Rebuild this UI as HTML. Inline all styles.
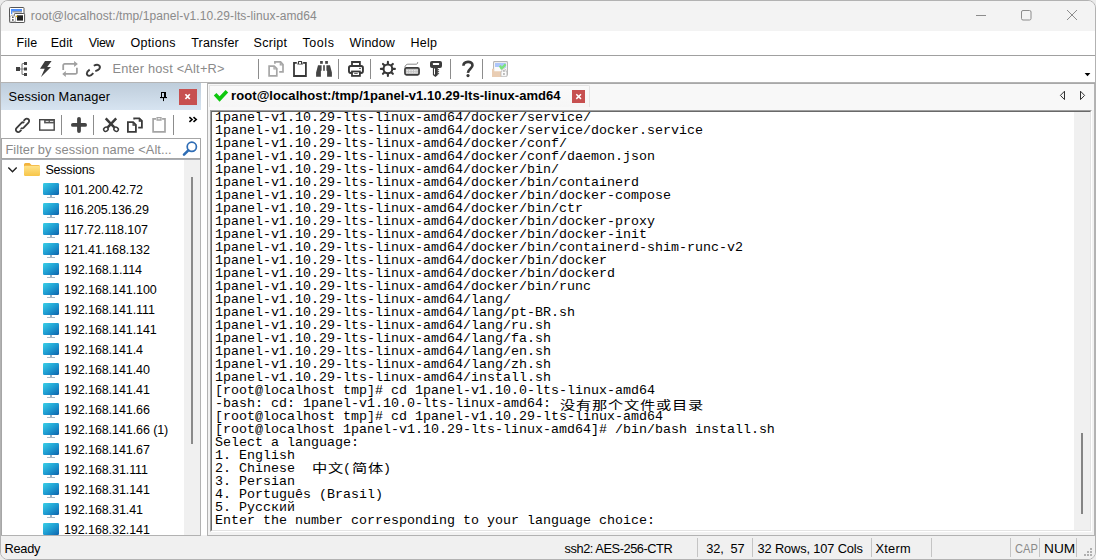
<!DOCTYPE html>
<html lang="en">
<head>
<meta charset="utf-8">
<title>root@localhost:/tmp/1panel-v1.10.29-lts-linux-amd64</title>
<style>
html,body{margin:0;padding:0;background:#ebebeb;}
body{width:1096px;height:560px;position:relative;overflow:hidden;font-family:"Liberation Sans","Noto Sans CJK SC",sans-serif;font-size:12px;color:#000;}
.abs{position:absolute;}
.t{position:absolute;white-space:pre;line-height:16px;height:16px;}
#win{position:absolute;left:0;top:0;width:1094px;height:558px;border:1px solid #b2b2b2;border-radius:8px 8px 8px 8px;background:#f0f0f0;overflow:hidden;}
#win > *{position:absolute;}
/* coordinates inside #win are offset by -1 (border) ; use .in wrapper shifted */
#in{left:-1px;top:-1px;width:1096px;height:560px;}
#in > *{position:absolute;}
#title{left:0;top:0;width:1096px;height:31px;background:#f3f3f3;}
#menu{left:0;top:31px;width:1096px;height:24px;background:#fff;}
#menuline{left:1px;top:55px;width:1094px;height:1px;background:#a0a0a0;}
#tool{left:0;top:56px;width:1096px;height:26px;background:#fff;}
#toolline{left:0;top:82px;width:1096px;height:1px;background:#b4b4b4;}
#main{left:0;top:83px;width:1096px;height:452px;background:#fff;}
#smhead{left:1px;top:83px;width:200px;height:27px;background:linear-gradient(#becddb,#d7e4f1);}
#status{left:0;top:536px;width:1096px;height:24px;background:#f0f0f0;}
#statusline{left:1px;top:535px;width:200px;height:1px;background:#b2b2b2;}
.term{font-family:"Liberation Mono","Noto Sans CJK SC",monospace;font-size:13.33px;line-height:13px;white-space:pre;color:#000;}
.m{top:35px;font-size:12.5px;}
.sess{position:absolute;left:64px;height:20px;line-height:22px;white-space:pre;font-size:12.500px;letter-spacing:-0.080px;}
.mon{position:absolute;left:43px;width:17px;height:16px;}
.ln{height:13px;}
.cj{font-family:"Noto Sans CJK SC",sans-serif;font-size:12px;display:inline-block;height:13px;line-height:13px;vertical-align:top;letter-spacing:0.600px;position:relative;top:0.600px;left:1.500px;transform:scaleX(1.27);transform-origin:0 0;}
.st{top:541px;font-size:12.800px;}
.sep{position:absolute;width:1px;background:#c4c4c4;}
</style>
</head>
<body>
<div id="win"><div id="in">
<div id="title"></div>
<div id="menu"></div>
<div id="menuline"></div>
<div id="tool"></div>
<div id="toolline"></div>
<div id="main"></div>
<div id="smhead"></div>
<div id="statusline"></div>
<div id="status"></div>
<!--TITLE-->
<svg class="abs" style="left:9px;top:7px" width="17" height="17" viewBox="0 0 17 17">
<rect x="0.500" y="0.500" width="14.500" height="15" rx="0.800" fill="#fff" stroke="#555"/>
<rect x="2" y="2" width="11" height="2.400" fill="#4d90fe"/>
<rect x="2" y="2" width="1.300" height="5.200" fill="#4d90fe"/>
<path d="M3.500 4.900H13" stroke="#666" stroke-width="0.900"/>
<rect x="5.400" y="6.500" width="10.200" height="9" rx="0.800" fill="#fff" stroke="#555"/>
<rect x="8" y="8.300" width="6" height="5.300" fill="#222"/>
<circle cx="7.600" cy="9.400" r="0.800" fill="#f5c000"/>
<path d="M1 14.800V10.600Q1 8.200 3.800 8.200Q6.600 8.200 6.600 10.600V14.800Z" fill="#fff" stroke="#8a8a8a" stroke-width="0.600"/>
<rect x="3.100" y="9.500" width="1.500" height="1.400" fill="#333"/>
<rect x="3.100" y="12.200" width="1.500" height="1.500" fill="#333"/>
</svg>
<span class="t" id="ttl" style="left:30.8px;top:8px;color:#8a8a8a;font-size:12px;letter-spacing:0.086px">root@localhost:/tmp/1panel-v1.10.29-lts-linux-amd64</span>
<svg class="abs" style="left:970px;top:5px" width="116" height="22" viewBox="0 0 116 22">
<g fill="none" stroke="#8c8c8c" stroke-width="1">
<path d="M6 10.5H16"/>
<rect x="51.5" y="5.5" width="9.5" height="9.500" rx="1.5"/>
<path d="M97 5L107 15M107 5L97 15"/>
</g>
</svg>
<!--MENU-->
<span class="t m" id="m0" style="left:16.5px;letter-spacing:0.167px">File</span>
<span class="t m" id="m1" style="left:50.7px;letter-spacing:0.099px">Edit</span>
<span class="t m" id="m2" style="left:88.7px;letter-spacing:-0.315px">View</span>
<span class="t m" id="m3" style="left:130.4px;letter-spacing:0.333px">Options</span>
<span class="t m" id="m4" style="left:191.2px;letter-spacing:0.216px">Transfer</span>
<span class="t m" id="m5" style="left:253.6px;letter-spacing:0.280px">Script</span>
<span class="t m" id="m6" style="left:302.5px;letter-spacing:0.562px">Tools</span>
<span class="t m" id="m7" style="left:349.6px;letter-spacing:0.160px">Window</span>
<span class="t m" id="m8" style="left:410.5px;letter-spacing:0.252px">Help</span>
<!--TOOLBAR-->
<svg class="abs" style="left:0;top:56px" width="520" height="26" viewBox="0 56 520 26">
<!-- connect -->
<g fill="#404040">
<rect x="16" y="67" width="4" height="4"/>
<rect x="24" y="62" width="3" height="3"/>
<rect x="24" y="67.500" width="3" height="3"/>
<rect x="24" y="73" width="3" height="3"/>
</g>
<path d="M20 69H24" stroke="#7a7a7a" stroke-width="1.200"/>
<path d="M24 63.500H23A1 1 0 0 0 22 64.500V73.500A1 1 0 0 0 23 74.500H24" fill="none" stroke="#7a7a7a" stroke-width="1.100"/>
<!-- lightning -->
<path d="M45 61H51.600L47.200 67.100H51L41 77L44.700 68.800H40Z" fill="#3c3c3c"/>
<!-- repeat -->
<g fill="none" stroke="#a0a0a0" stroke-width="1.800">
<path d="M63.200 70V65.400A1.500 1.500 0 0 1 64.700 63.900H75"/>
<path d="M76.900 67.800V72.400A1.500 1.500 0 0 1 75.400 73.900H65"/>
</g>
<path d="M74.100 60.900L77.900 63.900L74.100 66.900ZM65.800 71L62.200 73.900L65.800 76.900Z" fill="#a0a0a0"/>
<!-- chain -->
<g fill="none" stroke="#3c3c3c" stroke-width="1.900">
<path d="M93.800 65.800Q96.800 64 98.800 65.200Q100.800 66.700 99.300 68.900Q98.200 70.300 95.300 71.100"/>
<path d="M89.700 69.600Q87 71.400 86.800 73.500Q86.900 75.700 89.300 75.900Q91.200 75.700 93.300 73.100"/>
</g>
<!-- separators -->
<g stroke="#8c8c8c" stroke-width="1">
<path d="M258.500 59V79M338.500 59V79M370.500 59V79M450.500 59V79M482.500 59V79"/>
</g>
<!-- copy (disabled) -->
<g fill="none" stroke="#a6a6a6" stroke-width="1.700">
<path d="M274.900 63.700V61.900H280.600L283 64.600V71.900H279.200"/>
<path d="M269.100 66.100H274.200L276.800 68.700V75.900H269.100Z"/>
</g>
<path d="M280.300 62V64.900H283M274 66.200V69H276.700" fill="none" stroke="#a6a6a6" stroke-width="1.200"/>
<!-- clipboard -->
<path d="M296.800 62.900H294V76H305.900V62.900H303.100" fill="none" stroke="#383838" stroke-width="1.800"/>
<path d="M298.300 61.100H301.900L302.900 64.600H297.300Z" fill="#383838"/>
<rect x="299" y="62" width="2" height="1.800" fill="#fff"/>
<!-- binoculars -->
<g fill="#444">
<rect x="320.100" y="61" width="2.700" height="2.800"/>
<rect x="325.200" y="61" width="2.700" height="2.800"/>
<path d="M318 65.200H321.600V70.800H320.900V76.700H316.100V72.400Z"/>
<path d="M326.400 65.200H330L331.900 72.400V76.700H327.100V70.800H326.400Z"/>
<rect x="323.200" y="65.200" width="1.600" height="5.600"/>
</g>
<!-- printer -->
<g>
<path d="M352 65.500V62H359.900V65.500" fill="none" stroke="#383838" stroke-width="1.800"/>
<rect x="348.950" y="66.050" width="14" height="6.900" rx="1.900" fill="#fff" stroke="#383838" stroke-width="1.900"/>
<rect x="352" y="71.500" width="7.900" height="4.400" fill="#fff" stroke="#383838" stroke-width="1.800"/>
<rect x="354.200" y="73.100" width="3.500" height="0.900" fill="#555"/>
<rect x="359" y="67.900" width="2" height="0.900" fill="#444"/>
</g>
<!-- gear -->
<g fill="none" stroke="#383838">
<circle cx="387.900" cy="68.900" r="4.350" stroke-width="2.100"/>
<path d="M392.90 68.90L394.90 68.90M391.44 72.44L392.85 73.85M387.90 73.90L387.90 75.90M384.36 72.44L382.95 73.85M382.90 68.90L380.90 68.90M384.36 65.36L382.95 63.95M387.90 63.90L387.90 61.90M391.44 65.36L392.85 63.95" stroke-width="2.100" stroke-linecap="round"/>
</g>
<!-- keyboard -->
<g>
<rect x="404.950" y="67.850" width="14.100" height="7" rx="1.500" fill="#c4c4c4" stroke="#3c3c3c" stroke-width="1.700"/>
<path d="M404.700 67.200C405.500 65.500 406.300 64.200 407.800 64.200H416C417.200 64.200 417.700 63.500 417.700 62.100" fill="none" stroke="#6a6a6a" stroke-width="0.800"/>
<path d="M406.500 70.500H417.500M406.500 72.300H417.500" stroke="#ededed" stroke-width="0.900" stroke-dasharray="1.600 0.900"/>
</g>
<!-- key -->
<g fill="#3a3a3a">
<rect x="430" y="61" width="12" height="7" rx="2"/>
<path d="M432.900 67.500H437.800V74.900L435.400 77L432.900 74.900Z"/>
<rect x="437.500" y="69.200" width="1.600" height="1"/>
<rect x="437.500" y="71.200" width="1.600" height="1"/>
<rect x="437.500" y="73.200" width="1.600" height="1"/>
</g>
<rect x="432.900" y="63" width="6.200" height="2.100" rx="0.500" fill="#fff"/>
<rect x="434" y="68.500" width="1" height="6" fill="#fff"/>
<!-- help -->
<path d="M463.400 65.800C463.500 60.700 472.500 60.600 472.500 65.300C472.500 68.500 468 68.900 467.900 72.900" fill="none" stroke="#3a3a3a" stroke-width="2.600"/>
<circle cx="468" cy="75.600" r="1.600" fill="#3a3a3a"/>
<!-- image icon (disabled) -->
<g>
<rect x="493.600" y="61.600" width="13.800" height="13.800" rx="0.800" fill="#fff" stroke="#b4b4b4" stroke-width="1.100"/>
<rect x="495" y="63" width="11" height="4.800" fill="#adc6fb"/>
<rect x="494.800" y="67" width="5.400" height="4.500" fill="#fbfbfb"/>
<path d="M492 68.800H494.200V71.300H501V76.900H492Z" fill="#e9cdb3"/>
<path d="M499.900 65.600L501.600 68.600L505.600 64.300" stroke="#7ce47c" stroke-width="2.300" fill="none" stroke-linejoin="round"/>
<path d="M501 76.400V71.600H501.800V70.800A2.100 2.100 0 0 1 506 70.800V71.600H506.900V76.400Z" fill="#fcfcfc" stroke="#b9b9b9" stroke-width="0.800"/>
<rect x="503.200" y="70.200" width="1.500" height="1.500" fill="#9a9a9a"/>
<rect x="503.200" y="73.200" width="1.500" height="1.600" fill="#9a9a9a"/>
</g>
</svg>
<span class="t" id="enterhost" style="left:112.5px;top:61px;color:#8a8a8a;font-size:12.800px;letter-spacing:0.206px">Enter host &lt;Alt+R&gt;</span>
<svg class="abs" style="left:1084px;top:72px" width="8" height="6" viewBox="0 0 8 6"><path d="M0.600 1H6.400L3.500 4.300Z" fill="#000"/></svg>
<!--SM-->
<span class="t" id="smtitle" style="left:8.5px;top:89px;font-size:12.800px;letter-spacing:0.129px">Session Manager</span>
<svg class="abs" style="left:159px;top:91px" width="10" height="12" viewBox="159 91 10 12"><g fill="#000"><rect x="161" y="92" width="5" height="1"/><rect x="161" y="92" width="1" height="5.500"/><rect x="164" y="92" width="2" height="5.500"/><rect x="160" y="97" width="7" height="1.100"/><rect x="163" y="98" width="1" height="3.100"/></g></svg>
<div class="abs" style="left:179px;top:89px;width:18px;height:16px;background:#c75050"></div>
<svg class="abs" style="left:184px;top:93px" width="8" height="8" viewBox="184 93 8 8"><path d="M185.400 94.200L189.800 99M189.800 94.200L185.400 99" stroke="#fff" stroke-width="1.700"/></svg>
<div class="abs" style="left:1px;top:110px;width:200px;height:28px;background:#fff"></div>
<svg class="abs" style="left:0;top:110px" width="202" height="28" viewBox="0 110 202 28">
<!-- link -->
<g fill="none" stroke="#3c3c3c" stroke-width="1.800">
<path transform="translate(20.530 127.300) rotate(-46.500)" d="M-1.200 2.350H-3.400A2.350 2.350 0 0 1 -3.400 -2.350H3.600A2.350 2.350 0 0 1 5.914 -0.408"/>
<path transform="translate(24.470 123.400) rotate(-46.500)" d="M1.200 -2.350H3.400A2.350 2.350 0 0 1 3.400 2.350H-3.600A2.350 2.350 0 0 1 -5.914 0.408"/>
</g>
<!-- window -->
<rect x="39.700" y="119.700" width="14.500" height="10.400" fill="none" stroke="#444" stroke-width="1.400"/>
<rect x="44.100" y="119.700" width="10.100" height="3.700" fill="#555"/>
<path d="M45.700 121.400H48.600M49.900 121.400H53.300" stroke="#fff" stroke-width="0.900"/>
<!-- seps -->
<path d="M61.500 115V135M93.500 115V135M173.500 115V135" stroke="#8c8c8c" stroke-width="1"/>
<!-- plus -->
<path d="M79 118.800V131M72.900 124.900H85.100" stroke="#444" stroke-width="3.800" stroke-linecap="round"/>
<!-- scissors -->
<g fill="none" stroke="#3c3c3c">
<path d="M105.700 118.300L114.300 127.300M116.200 118.300L107.700 127.300" stroke-width="2.500"/>
<ellipse cx="105.900" cy="129.300" rx="2.300" ry="2" stroke-width="1.500" transform="rotate(-35 105.900 129.300)"/>
<ellipse cx="116.100" cy="129.300" rx="2.300" ry="2" stroke-width="1.500" transform="rotate(35 116.100 129.300)"/>
</g>
<!-- copy -->
<g fill="none" stroke="#3a3a3a" stroke-width="1.800">
<path d="M134.200 119.600V118.300H139.400L141.900 120.800V127.600H138.200"/>
<path d="M127.900 122.200H133.200L135.900 124.900V131.800H127.900Z"/>
</g>
<path d="M139.300 118.400V121.100H141.900M133.100 122.300V125.100H135.800" fill="none" stroke="#3a3a3a" stroke-width="1.200"/>
<!-- paste (disabled) -->
<path d="M156 118.900H153.100V131.800H165V118.900H162.100" fill="none" stroke="#a4a4a4" stroke-width="1.700"/>
<path d="M157.100 120V117.700H161V120Z" fill="#fff" stroke="#a4a4a4" stroke-width="1.300"/>
<!-- chevrons -->
<path d="M189.400 117.200L192 119.500L189.400 121.800M193.500 117.200L196.200 119.500L193.500 121.800" fill="none" stroke="#000" stroke-width="1.600"/>
</svg>
<div class="abs" style="left:1px;top:159px;width:200px;height:1px;background:#a9adb4"></div>
<div class="abs" style="left:1px;top:138px;width:198px;height:19px;border:1px solid #a6a6a6;border-width:1px 1px 1px 1px;background:#fff;box-sizing:content-box"></div>
<span class="t" id="filter" style="left:5.5px;top:142px;color:#8a8a8a;font-size:12.800px;letter-spacing:0.052px">Filter by session name &lt;Alt...</span>
<svg class="abs" style="left:182px;top:140px" width="17" height="17" viewBox="0 0 17 17">
<circle cx="9.800" cy="6.800" r="4.600" fill="none" stroke="#2f6db5" stroke-width="1.700"/>
<path d="M6.300 10.300L2 14.600" stroke="#2f6db5" stroke-width="2.600" stroke-linecap="round"/>
</svg>
<!-- tree -->
<div class="abs" style="left:1px;top:160px;width:200px;height:375px;border-left:1px solid #a6a6a6;border-right:1px solid #b2b2b2;background:#fff;box-sizing:border-box"></div>
<div class="abs" style="left:184px;top:160px;width:16px;height:375px;background:#f0f0f0"></div>
<div class="abs" style="left:191px;top:177px;width:2px;height:267px;background:#8a8a8a"></div>
<svg width="0" height="0" style="position:absolute"><defs>
<linearGradient id="mg" x1="0" y1="0" x2="1" y2="1"><stop offset="0" stop-color="#3bd0e6"/><stop offset="0.500" stop-color="#1f9dd2"/><stop offset="1" stop-color="#0e63ad"/></linearGradient>
<linearGradient id="fg" x1="0" y1="0" x2="0" y2="1"><stop offset="0" stop-color="#ffe38a"/><stop offset="1" stop-color="#f7c548"/></linearGradient>
</defs></svg>
<svg class="abs" style="left:7px;top:165px" width="12" height="9" viewBox="7 165 12 9"><path d="M8.300 167.600L12.500 171.800L16.700 167.600" fill="none" stroke="#222" stroke-width="1.400"/></svg>
<svg class="abs" style="left:24px;top:162px" width="17" height="15" viewBox="0 0 17 15">
<path d="M0 2.500A1.500 1.500 0 0 1 1.500 1H5.500L7.500 3H14.500A1.500 1.500 0 0 1 16 4.500V6H0Z" fill="#f2b23a"/>
<rect x="0" y="3.800" width="16" height="10.200" rx="1.200" fill="url(#fg)"/>
</svg>
<span class="sess" id="sesslbl" style="left:45.5px;top:159px;letter-spacing:-0.227px">Sessions</span>
<div class="abs" id="treeclip" style="left:2px;top:160px;width:182px;height:375px;overflow:hidden"><div style="position:absolute;left:-2px;top:-160px;width:200px;height:560px">
<svg class="mon" style="top:183px" viewBox="0 0 17 16"><rect x="0" y="0" width="16" height="12" rx="1.200" fill="url(#mg)"/><rect x="7" y="12" width="2" height="2" fill="#9fb2c4"/><rect x="4" y="14" width="8" height="1" fill="#a9b6c2"/></svg><span class="sess" style="top:179px">101.200.42.72</span>
<svg class="mon" style="top:203px" viewBox="0 0 17 16"><rect x="0" y="0" width="16" height="12" rx="1.200" fill="url(#mg)"/><rect x="7" y="12" width="2" height="2" fill="#9fb2c4"/><rect x="4" y="14" width="8" height="1" fill="#a9b6c2"/></svg><span class="sess" style="top:199px">116.205.136.29</span>
<svg class="mon" style="top:223px" viewBox="0 0 17 16"><rect x="0" y="0" width="16" height="12" rx="1.200" fill="url(#mg)"/><rect x="7" y="12" width="2" height="2" fill="#9fb2c4"/><rect x="4" y="14" width="8" height="1" fill="#a9b6c2"/></svg><span class="sess" style="top:219px">117.72.118.107</span>
<svg class="mon" style="top:243px" viewBox="0 0 17 16"><rect x="0" y="0" width="16" height="12" rx="1.200" fill="url(#mg)"/><rect x="7" y="12" width="2" height="2" fill="#9fb2c4"/><rect x="4" y="14" width="8" height="1" fill="#a9b6c2"/></svg><span class="sess" style="top:239px">121.41.168.132</span>
<svg class="mon" style="top:263px" viewBox="0 0 17 16"><rect x="0" y="0" width="16" height="12" rx="1.200" fill="url(#mg)"/><rect x="7" y="12" width="2" height="2" fill="#9fb2c4"/><rect x="4" y="14" width="8" height="1" fill="#a9b6c2"/></svg><span class="sess" style="top:259px">192.168.1.114</span>
<svg class="mon" style="top:283px" viewBox="0 0 17 16"><rect x="0" y="0" width="16" height="12" rx="1.200" fill="url(#mg)"/><rect x="7" y="12" width="2" height="2" fill="#9fb2c4"/><rect x="4" y="14" width="8" height="1" fill="#a9b6c2"/></svg><span class="sess" id="ipref" style="top:279px">192.168.141.100</span>
<svg class="mon" style="top:303px" viewBox="0 0 17 16"><rect x="0" y="0" width="16" height="12" rx="1.200" fill="url(#mg)"/><rect x="7" y="12" width="2" height="2" fill="#9fb2c4"/><rect x="4" y="14" width="8" height="1" fill="#a9b6c2"/></svg><span class="sess" style="top:299px">192.168.141.111</span>
<svg class="mon" style="top:323px" viewBox="0 0 17 16"><rect x="0" y="0" width="16" height="12" rx="1.200" fill="url(#mg)"/><rect x="7" y="12" width="2" height="2" fill="#9fb2c4"/><rect x="4" y="14" width="8" height="1" fill="#a9b6c2"/></svg><span class="sess" style="top:319px">192.168.141.141</span>
<svg class="mon" style="top:343px" viewBox="0 0 17 16"><rect x="0" y="0" width="16" height="12" rx="1.200" fill="url(#mg)"/><rect x="7" y="12" width="2" height="2" fill="#9fb2c4"/><rect x="4" y="14" width="8" height="1" fill="#a9b6c2"/></svg><span class="sess" style="top:339px">192.168.141.4</span>
<svg class="mon" style="top:363px" viewBox="0 0 17 16"><rect x="0" y="0" width="16" height="12" rx="1.200" fill="url(#mg)"/><rect x="7" y="12" width="2" height="2" fill="#9fb2c4"/><rect x="4" y="14" width="8" height="1" fill="#a9b6c2"/></svg><span class="sess" style="top:359px">192.168.141.40</span>
<svg class="mon" style="top:383px" viewBox="0 0 17 16"><rect x="0" y="0" width="16" height="12" rx="1.200" fill="url(#mg)"/><rect x="7" y="12" width="2" height="2" fill="#9fb2c4"/><rect x="4" y="14" width="8" height="1" fill="#a9b6c2"/></svg><span class="sess" style="top:379px">192.168.141.41</span>
<svg class="mon" style="top:403px" viewBox="0 0 17 16"><rect x="0" y="0" width="16" height="12" rx="1.200" fill="url(#mg)"/><rect x="7" y="12" width="2" height="2" fill="#9fb2c4"/><rect x="4" y="14" width="8" height="1" fill="#a9b6c2"/></svg><span class="sess" style="top:399px">192.168.141.66</span>
<svg class="mon" style="top:423px" viewBox="0 0 17 16"><rect x="0" y="0" width="16" height="12" rx="1.200" fill="url(#mg)"/><rect x="7" y="12" width="2" height="2" fill="#9fb2c4"/><rect x="4" y="14" width="8" height="1" fill="#a9b6c2"/></svg><span class="sess" style="top:419px">192.168.141.66 (1)</span>
<svg class="mon" style="top:443px" viewBox="0 0 17 16"><rect x="0" y="0" width="16" height="12" rx="1.200" fill="url(#mg)"/><rect x="7" y="12" width="2" height="2" fill="#9fb2c4"/><rect x="4" y="14" width="8" height="1" fill="#a9b6c2"/></svg><span class="sess" style="top:439px">192.168.141.67</span>
<svg class="mon" style="top:463px" viewBox="0 0 17 16"><rect x="0" y="0" width="16" height="12" rx="1.200" fill="url(#mg)"/><rect x="7" y="12" width="2" height="2" fill="#9fb2c4"/><rect x="4" y="14" width="8" height="1" fill="#a9b6c2"/></svg><span class="sess" style="top:459px">192.168.31.111</span>
<svg class="mon" style="top:483px" viewBox="0 0 17 16"><rect x="0" y="0" width="16" height="12" rx="1.200" fill="url(#mg)"/><rect x="7" y="12" width="2" height="2" fill="#9fb2c4"/><rect x="4" y="14" width="8" height="1" fill="#a9b6c2"/></svg><span class="sess" style="top:479px">192.168.31.141</span>
<svg class="mon" style="top:503px" viewBox="0 0 17 16"><rect x="0" y="0" width="16" height="12" rx="1.200" fill="url(#mg)"/><rect x="7" y="12" width="2" height="2" fill="#9fb2c4"/><rect x="4" y="14" width="8" height="1" fill="#a9b6c2"/></svg><span class="sess" style="top:499px">192.168.31.41</span>
<svg class="mon" style="top:523px" viewBox="0 0 17 16"><rect x="0" y="0" width="16" height="12" rx="1.200" fill="url(#mg)"/><rect x="7" y="12" width="2" height="2" fill="#9fb2c4"/><rect x="4" y="14" width="8" height="1" fill="#a9b6c2"/></svg><span class="sess" style="top:519px">192.168.32.141</span>
</div></div>
<!--TABS-->
<div class="abs" style="left:207px;top:83px;width:889px;height:1px;background:#a8a8a8"></div>
<div class="abs" style="left:208px;top:84px;width:886px;height:26px;background:#f8f8f8"></div>
<div class="abs" style="left:209px;top:85px;width:381px;height:22px;background:linear-gradient(#fafafa,#f6f6f6);border:1px solid #e4e4e4;border-bottom:none;border-radius:0 2px 0 0;box-sizing:border-box"></div>
<svg class="abs" style="left:213px;top:89px" width="16" height="14" viewBox="213 89 16 14"><path d="M213.800 95.600L216.400 93.100L219.600 96.300L225.600 90L228.200 92.400L219.600 101.800Z" fill="#0fc80f"/></svg>
<span class="t" id="tabtitle" style="left:231.1px;top:88px;font-weight:bold;font-size:13px;letter-spacing:0.066px">root@localhost:/tmp/1panel-v1.10.29-lts-linux-amd64</span>
<div class="abs" style="left:572px;top:90px;width:13px;height:13px;background:#c75050"></div>
<svg class="abs" style="left:575px;top:93px" width="7" height="7" viewBox="575 93 7 7"><path d="M576.300 94.300L581 98.900M581 94.300L576.300 98.900" stroke="#fff" stroke-width="1.500"/></svg>
<svg class="abs" style="left:1058px;top:89px" width="30" height="13" viewBox="1058 89 30 13"><path d="M1064.500 91.200L1060.400 95.400L1064.500 99.600ZM1080.500 91.200L1084.600 95.400L1080.500 99.600Z" fill="#f4f4f4" stroke="#333" stroke-width="1"/></svg>
<!--TERM-->
<div class="abs" style="left:207px;top:83px;width:1px;height:453px;background:#b2b2b2"></div>
<div class="abs" style="left:208px;top:110px;width:886px;height:425px;background:#f2f2f2"></div>
<div class="abs" style="left:207px;top:535px;width:888px;height:1px;background:#b2b2b2"></div>
<div class="abs" style="left:1094px;top:84px;width:1px;height:452px;background:#b4b4b4"></div>
<div class="abs" style="left:210px;top:110px;width:882px;height:422px;box-sizing:border-box;border:1px solid;border-color:#a0a0a0 #fff #fff #a0a0a0;background:#fff"></div>
<div class="abs" style="left:211px;top:111px;width:880px;height:420px;box-sizing:border-box;border:1px solid;border-color:#696969 #e3e3e3 #e3e3e3 #696969;background:#fff"></div>
<div class="abs" style="left:1074px;top:112px;width:16px;height:418px;background:#f0f0f0"></div>
<div class="abs" style="left:1081px;top:433px;width:2px;height:81px;background:#858585"></div>
<div class="abs term" id="term" style="left:215px;top:111px;width:860px;height:418px;overflow:hidden"><div class="ln">1panel-v1.10.29-lts-linux-amd64/docker/service/</div><div class="ln">1panel-v1.10.29-lts-linux-amd64/docker/service/docker.service</div><div class="ln">1panel-v1.10.29-lts-linux-amd64/docker/conf/</div><div class="ln">1panel-v1.10.29-lts-linux-amd64/docker/conf/daemon.json</div><div class="ln">1panel-v1.10.29-lts-linux-amd64/docker/bin/</div><div class="ln">1panel-v1.10.29-lts-linux-amd64/docker/bin/containerd</div><div class="ln">1panel-v1.10.29-lts-linux-amd64/docker/bin/docker-compose</div><div class="ln">1panel-v1.10.29-lts-linux-amd64/docker/bin/ctr</div><div class="ln">1panel-v1.10.29-lts-linux-amd64/docker/bin/docker-proxy</div><div class="ln">1panel-v1.10.29-lts-linux-amd64/docker/bin/docker-init</div><div class="ln">1panel-v1.10.29-lts-linux-amd64/docker/bin/containerd-shim-runc-v2</div><div class="ln">1panel-v1.10.29-lts-linux-amd64/docker/bin/docker</div><div class="ln">1panel-v1.10.29-lts-linux-amd64/docker/bin/dockerd</div><div class="ln">1panel-v1.10.29-lts-linux-amd64/docker/bin/runc</div><div class="ln">1panel-v1.10.29-lts-linux-amd64/lang/</div><div class="ln">1panel-v1.10.29-lts-linux-amd64/lang/pt-BR.sh</div><div class="ln">1panel-v1.10.29-lts-linux-amd64/lang/ru.sh</div><div class="ln">1panel-v1.10.29-lts-linux-amd64/lang/fa.sh</div><div class="ln">1panel-v1.10.29-lts-linux-amd64/lang/en.sh</div><div class="ln">1panel-v1.10.29-lts-linux-amd64/lang/zh.sh</div><div class="ln">1panel-v1.10.29-lts-linux-amd64/install.sh</div><div class="ln">[root@localhost tmp]# cd 1panel-v1.10.0-lts-linux-amd64</div><div class="ln">-bash: cd: 1panel-v1.10.0-lts-linux-amd64: <span class="cj" style="width:144px">没有那个文件或目录</span></div><div class="ln">[root@localhost tmp]# cd 1panel-v1.10.29-lts-linux-amd64</div><div class="ln">[root@localhost 1panel-v1.10.29-lts-linux-amd64]# /bin/bash install.sh</div><div class="ln">Select a language:</div><div class="ln">1. English</div><div class="ln">2. Chinese  <span class="cj" style="width:32px;top:-0.800px">中文</span>(<span class="cj" style="width:32px;top:-0.800px">简体</span>)</div><div class="ln">3. Persian</div><div class="ln">4. Português (Brasil)</div><div class="ln">5. Русский</div><div class="ln">Enter the number corresponding to your language choice: </div></div>
<!--STATUS-->
<span class="t st" id="s0" style="left:4.5px;letter-spacing:-0.250px">Ready</span>
<span class="t st" id="s1" style="left:564.6px;letter-spacing:-0.444px">ssh2: AES-256-CTR</span>
<span class="t st" id="s2" style="left:706.2px;letter-spacing:-0.125px">32,  57</span>
<span class="t st" id="s3" style="left:757.5px;letter-spacing:-0.125px">32 Rows, 107 Cols</span>
<span class="t st" id="s4" style="left:875.5px;letter-spacing:0.250px">Xterm</span>
<span class="t st" id="s5" style="left:1014.6px;color:#8a8a8a;transform:scaleX(0.865);transform-origin:0 0">CAP</span>
<span class="t st" id="s6" style="left:1043.6px;transform:scaleX(1.07);transform-origin:0 0">NUM</span>
<div class="sep" style="left:697px;top:538px;height:19px"></div>
<div class="sep" style="left:752px;top:538px;height:19px"></div>
<div class="sep" style="left:871px;top:538px;height:19px"></div>
<div class="sep" style="left:931px;top:538px;height:19px"></div>
<div class="sep" style="left:1010px;top:538px;height:19px"></div>
<div class="sep" style="left:1039px;top:538px;height:19px"></div>
<div class="sep" style="left:1076px;top:538px;height:19px"></div>
<svg class="abs" style="left:1083px;top:547px" width="11" height="11" viewBox="0 0 11 11"><g fill="#b0b0b0"><rect x="7" y="1" width="2" height="2"/><rect x="4" y="4" width="2" height="2"/><rect x="7" y="4" width="2" height="2"/><rect x="1" y="7" width="2" height="2"/><rect x="4" y="7" width="2" height="2"/><rect x="7" y="7" width="2" height="2"/></g></svg>
</div></div>
</body>
</html>
